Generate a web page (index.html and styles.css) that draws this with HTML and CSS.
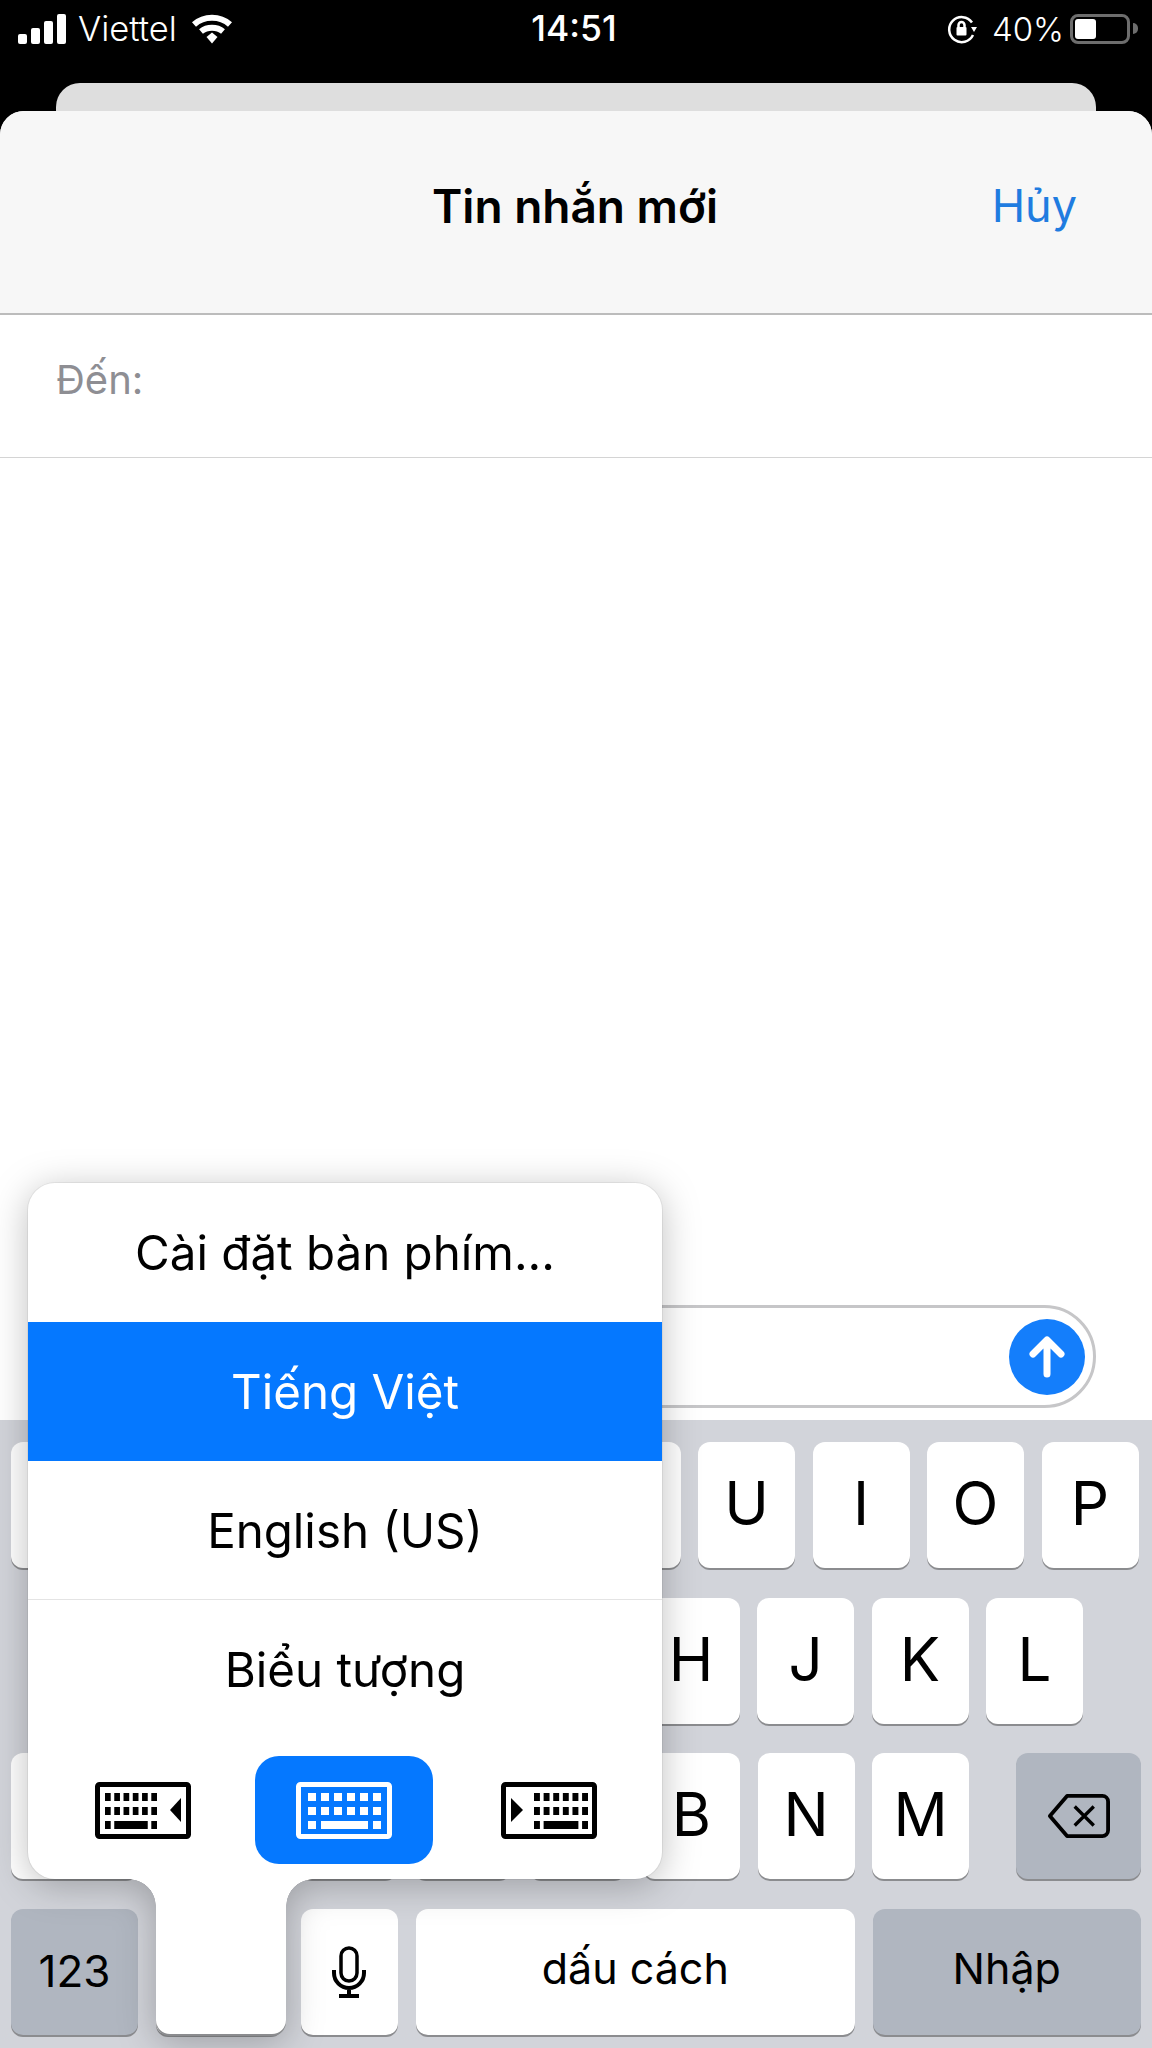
FILE: index.html
```html
<!DOCTYPE html>
<html lang="vi">

<head>
  <meta charset="UTF-8">
  <meta name="viewport" content="width=device-width, initial-scale=1.0">
  <title>Tin nhắn mới</title>

  <link rel="stylesheet" href="styles.css">
</head>

<body>
  <svg class="defs" width="0" height="0">
    <symbol id="keys-grid" viewBox="0 0 73 36" preserveAspectRatio="none">
      <path d="M0 0h8v8H0zM13 0h8v8h-8zM26 0h8v8h-8zM39 0h8v8h-8zM52 0h8v8h-8zM65 0h8v8h-8z" />
      <path d="M0 14h8v8H0zM13 14h8v8h-8zM26 14h8v8h-8zM39 14h8v8h-8zM52 14h8v8h-8zM65 14h8v8h-8z" />
      <path d="M0 28h8v8H0zM13 28h47v8H13zM65 28h8v8h-8z" />
    </symbol>
  </svg>

  <div id="app">
    <header class="status">
      <div class="status-left">
        <svg class="signal" width="48" height="30" viewBox="0 0 48 30">
          <rect x="0" y="20" width="9" height="10" rx="2" />
          <rect x="13" y="14" width="9" height="16" rx="2" />
          <rect x="26" y="7" width="9" height="23" rx="2" />
          <rect x="39" y="0" width="9" height="30" rx="2" />
        </svg>
        <span>Viettel</span>
        <svg class="wifi" width="42" height="30" viewBox="0 0 42 30">
          <path d="M3 10.500C13 1.500 29 1.500 39 10.500" />
          <path d="M10 17.500C16 12.500 26 12.500 32 17.500" />
          <path class="wifi-dot" d="M15.500 23L21 18.500 26.500 23 21 29.500z" />
        </svg>
      </div>
      <div class="status-time">14:51</div>
      <div class="status-right">
        <svg class="rotation" width="30" height="30" viewBox="0 0 30 30">
          <path class="rotation-arc" d="M25 8.500A12.500 12.500 0 1 0 26 21" />
          <path d="M24 13h6l-3 5z" />
          <rect x="9.500" y="13" width="10" height="8.500" rx="1" />
          <path class="rotation-shackle" d="M11.500 13v-2a3 3 0 0 1 6 0v2" />
        </svg>
        <span>40%</span>
        <div class="battery"><div class="battery-level"></div></div>
        <div class="battery-nub"></div>
      </div>
    </header>

    <div class="sheet-behind"></div>

    <main class="sheet">
      <div class="nav">
        <h1>Tin nhắn mới</h1>
        <span class="nav-cancel">Hủy</span>
      </div>
      <div class="to-row">Đến:</div>
      <div class="thread">
        <div class="composer">
          <div class="send">
            <svg width="36" height="42" viewBox="0 0 36 42">
              <path d="M18 38V5M4 18L18 4l14 14" />
            </svg>
          </div>
        </div>
      </div>

      <div class="keyboard">
        <div class="key-row row-top">
          <div class="key"></div><div class="key"></div><div class="key"></div><div class="key"></div><div class="key"></div>
          <div class="key"></div><div class="key">U</div><div class="key">I</div><div class="key">O</div><div class="key">P</div>
        </div>
        <div class="key-row row-home">
          <div class="key"></div><div class="key"></div><div class="key"></div><div class="key"></div><div class="key"></div>
          <div class="key">H</div><div class="key">J</div><div class="key">K</div><div class="key">L</div>
        </div>
        <div class="key-row row-bottom">
          <div class="key key-shift"></div>
          <div class="key"></div><div class="key"></div><div class="key"></div><div class="key"></div>
          <div class="key">B</div><div class="key">N</div><div class="key">M</div>
          <div class="key key-gray key-delete">
            <svg width="63" height="46" viewBox="0 0 66 48">
              <path class="delete-shape" d="M21 3h37a6 6 0 0 1 6 6v30a6 6 0 0 1-6 6H21L3 24z" />
              <path class="delete-x" d="M29 14l20 20M49 14L29 34" />
            </svg>
          </div>
        </div>
        <div class="key-row row-space">
          <div class="key key-gray key-123">123</div>
          <div class="key key-globe"></div>
          <div class="key key-mic">
            <svg width="34" height="52" viewBox="0 0 34 52">
              <rect class="mic-head" x="9" y="2" width="16" height="33" rx="8" />
              <path class="mic-stand" d="M2 24v3a15 15 0 0 0 30 0v-3M17 42v8M7 50h20" />
            </svg>
          </div>
          <div class="key key-space">dấu cách</div>
          <div class="key key-gray key-return">Nhập</div>
        </div>
      </div>
    </main>

    <div class="popover">
      <div class="popover-item">Cài đặt bàn phím...</div>
      <div class="popover-item popover-item-active">Tiếng Việt</div>
      <div class="popover-item popover-item-line">English (US)</div>
      <div class="popover-item">Biểu tượng</div>
      <div class="popover-docks">
        <svg class="dock-icon" width="96" height="57" viewBox="0 0 96 57">
          <rect class="dock-frame" x="2.500" y="2.500" width="91" height="52" rx="2" />
          <svg x="10" y="11" width="52" height="36"><use href="#keys-grid" /></svg>
          <path d="M86 16v24l-11-12z" />
        </svg>
        <div class="dock-current">
          <svg class="dock-icon" width="96" height="57" viewBox="0 0 96 57">
            <rect class="dock-frame" x="2.500" y="2.500" width="91" height="52" rx="2" />
            <svg x="12" y="11" width="73" height="36"><use href="#keys-grid" /></svg>
          </svg>
        </div>
        <svg class="dock-icon" width="96" height="57" viewBox="0 0 96 57">
          <rect class="dock-frame" x="2.500" y="2.500" width="91" height="52" rx="2" />
          <svg x="33" y="11" width="54" height="36"><use href="#keys-grid" /></svg>
          <path d="M10 16v24l12-12z" />
        </svg>
      </div>
      <div class="popover-stem"></div>
    </div>
  </div>
</body>

</html>
```

FILE: styles.css
```css
body {
  margin: 0;
  background: #000;
  font-family: Inter, "Noto Sans", sans-serif;
}

.defs {
  position: absolute;
}

#app {
  display: flex;
  flex-direction: column;
  height: 2048px;
  overflow: hidden;
  position: relative;
  width: 1152px;
}

.status {
  align-items: center;
  color: #fff;
  display: flex;
  font-size: 33px;
  font-weight: 300;
  height: 83px;
  justify-content: space-between;
  padding: 0 14px 26px 18px;
  box-sizing: border-box;
}

.status svg {
  fill: #fff;
}

.status-left,
.status-right {
  align-items: center;
  display: flex;
  width: 340px;
}

.status-right {
  justify-content: flex-end;
}

.status-left span {
  font-size: 34.500px;
  margin: 0 14px 0 12px;
}

.status-time {
  font-size: 35.500px;
  font-weight: 500;
  margin-right: 8px;
}

.wifi path {
  fill: none;
  stroke: #fff;
  stroke-width: 6px;
}

.wifi .wifi-dot {
  fill: #fff;
  stroke: none;
}

.rotation {
  margin-right: 15px;
}

.rotation-arc,
.rotation-shackle {
  fill: none;
  stroke: #fff;
  stroke-width: 2.500px;
}

.battery {
  border: 3px solid #6d6d6d;
  border-radius: 8px;
  box-sizing: border-box;
  height: 30px;
  margin-left: 6px;
  padding: 2px;
  width: 60px;
}

.battery-level {
  background: #fff;
  border-radius: 3px;
  height: 100%;
  width: 21px;
}

.battery-nub {
  background: #6d6d6d;
  border-radius: 0 5px 5px 0;
  height: 11px;
  margin-left: 3px;
  width: 5px;
}

.sheet-behind {
  background: #dedede;
  border-radius: 24px 24px 0 0;
  flex: none;
  height: 28px;
  margin: 0 56px;
}

.sheet {
  background: #fff;
  border-radius: 24px 24px 0 0;
  display: flex;
  flex: 1;
  flex-direction: column;
  overflow: hidden;
}

.nav {
  align-items: center;
  background: #f7f7f7;
  border-bottom: 2px solid #bcbcbc;
  box-sizing: border-box;
  display: flex;
  flex: none;
  height: 204px;
  justify-content: center;
  padding: 0 2px 13px 0;
  position: relative;
}

.nav h1 {
  font-size: 46px;
  font-weight: 600;
  margin: 0;
}

.nav-cancel {
  color: #1f7ce0;
  font-size: 45px;
  position: absolute;
  right: 75px;
}

.to-row {
  align-items: center;
  border-bottom: 1px solid #d4d4d4;
  box-sizing: border-box;
  color: #8e8e93;
  display: flex;
  flex: none;
  font-size: 40px;
  height: 143px;
  padding: 0 56px 13px;
}

.thread {
  align-items: flex-end;
  display: flex;
  flex: 1;
  justify-content: flex-end;
  padding: 0 56px 12px 200px;
}

.composer {
  align-items: center;
  border: 3px solid #c6c6c8;
  border-radius: 52px;
  box-sizing: border-box;
  display: flex;
  flex: 1;
  height: 103px;
  justify-content: flex-end;
  padding-right: 8px;
}

.send {
  align-items: center;
  background: #147efb;
  border-radius: 50%;
  display: flex;
  height: 76px;
  justify-content: center;
  width: 76px;
}

.send svg {
  fill: none;
  stroke: #fff;
  stroke-linecap: round;
  stroke-linejoin: round;
  stroke-width: 7px;
  width: 36px;
}

.keyboard {
  background: #d2d4da;
  box-sizing: border-box;
  display: flex;
  flex: none;
  flex-direction: column;
  gap: 29.500px;
  height: 628px;
  padding: 22px 0 0;
}

.key-row {
  display: flex;
  gap: 17.500px;
  height: 126px;
}

.row-top,
.row-bottom,
.row-space {
  padding-left: 11px;
}

.row-home {
  padding-left: 70px;
}

.key {
  align-items: center;
  background: #fff;
  border-radius: 12px;
  box-shadow: 0 2px 0 #8b8c8f;
  box-sizing: border-box;
  display: flex;
  flex: none;
  font-size: 60px;
  justify-content: center;
  padding-bottom: 4px;
  width: 97px;
}

.key-gray {
  background: #b0b6c0;
}

.key-shift {
  margin-right: 29.500px;
  width: 127px;
}

.key-delete {
  margin-left: 29.500px;
  padding-bottom: 0;
  width: 125px;
}

.key-123 {
  font-size: 44px;
  padding-bottom: 2px;
  width: 127px;
}

.key-globe {
  width: 127.500px;
}

.key-mic {
  padding-bottom: 0;
  width: 97.500px;
}

.key-mic svg {
  fill: none;
  stroke: #000;
}

.mic-head,
.mic-stand {
  stroke-width: 3.500px;
}

.mic-stand {
  stroke-width: 4px;
}

.key-space {
  font-size: 43px;
  padding-bottom: 8px;
  width: 439.500px;
}

.key-return {
  font-size: 43px;
  padding-bottom: 8px;
  width: 268.500px;
}

.delete-shape,
.delete-x {
  fill: none;
  stroke: #000;
  stroke-linejoin: round;
  stroke-width: 4px;
}

.delete-x {
  stroke-width: 3.500px;
}

.popover {
  background: #fff;
  border-radius: 27px;
  box-shadow: 0 0 0 1px rgba(0, 0, 0, 0.06);
  display: grid;
  filter: drop-shadow(0 6px 18px rgba(0, 0, 0, 0.25));
  grid-template-rows: repeat(4, 139px) 1fr;
  height: 696px;
  left: 28px;
  position: absolute;
  top: 1183px;
  width: 634px;
}

.popover-item {
  align-items: center;
  display: flex;
  font-size: 47.500px;
  justify-content: center;
}

.popover-item-active {
  background: #0578ff;
  color: #fff;
}

.popover-item-line {
  border-bottom: 1px solid #e4e4e4;
}

.popover-docks {
  align-items: flex-start;
  display: flex;
  justify-content: space-between;
  padding: 17px 65px 0 67px;
}

.dock-icon {
  fill: #000;
  flex: none;
  margin-top: 26px;
}

.dock-frame {
  fill: none;
  stroke: #000;
  stroke-width: 5px;
}

.dock-current {
  align-items: center;
  background: #0578ff;
  border-radius: 24px;
  display: flex;
  height: 108px;
  justify-content: center;
  margin: 0 2px 0 -2px;
  width: 178px;
}

.dock-current .dock-icon {
  fill: #fff;
  margin-top: 0;
}

.dock-current .dock-frame {
  stroke: #fff;
}

/* the key that was pressed, joined to the panel */
.popover-stem {
  background: #fff;
  border-radius: 0 0 14px 14px;
  box-shadow: 0 2px 0 #8b8c8f;
  height: 155px;
  left: 128px;
  position: absolute;
  top: 100%;
  width: 130px;
}

.popover-stem::before,
.popover-stem::after {
  content: "";
  height: 27px;
  position: absolute;
  top: 0;
  width: 27px;
}

.popover-stem::before {
  background: radial-gradient(circle at 0 100%, transparent 26.500px, #fff 27px);
  right: 100%;
}

.popover-stem::after {
  background: radial-gradient(circle at 100% 100%, transparent 26.500px, #fff 27px);
  left: 100%;
}
```
